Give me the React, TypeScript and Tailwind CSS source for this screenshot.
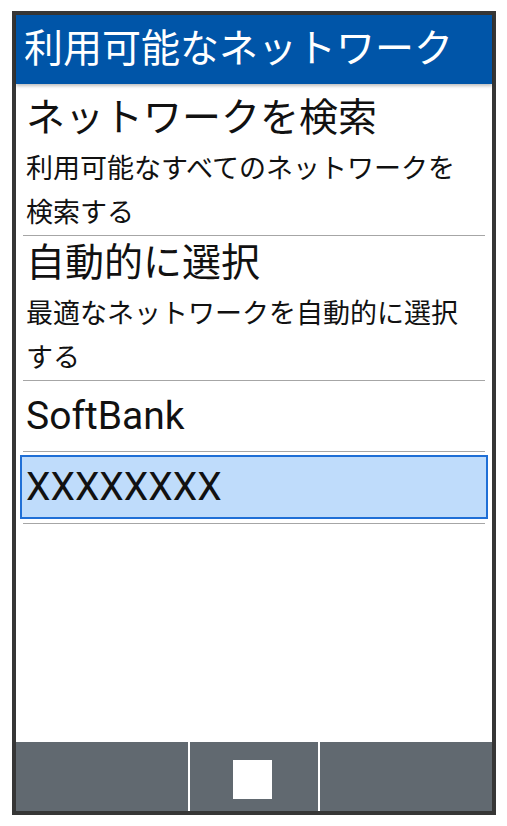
import React from "react";

const font = { fontFamily: 'Roboto, "Noto Sans CJK JP", sans-serif' };

export default function App() {
  return (
    <div className="w-[507px] h-[826px] bg-white pt-[11px] pl-[12px]" style={font}>
      <div className="w-[484px] h-[804px] border-4 border-[#363636] flex flex-col bg-white">
        <div className="h-[69px] bg-[#0055a8] flex items-center pl-[8px] relative z-10 shadow-[0_2px_3px_rgba(0,0,0,0.25)]">
          <span className="text-white text-[39px] leading-none whitespace-nowrap">利用可能なネットワーク</span>
        </div>
        <div className="flex-1 flex flex-col text-[#111]">
          <div className="pt-[9px] px-[10px]">
            <div className="text-[39px] leading-[50px] whitespace-nowrap">ネットワークを検索</div>
            <div className="mt-[4px] text-[27px] leading-[44px]">利用可能なすべてのネットワークを<br />検索する</div>
          </div>
          <div className="mx-[7px] h-px bg-[#a6a6a6]" />
          <div className="pt-[2px] px-[10px]">
            <div className="text-[39px] leading-[50px] whitespace-nowrap">自動的に選択</div>
            <div className="mt-[4px] text-[27px] leading-[44px]">最適なネットワークを自動的に選択<br />する</div>
          </div>
          <div className="mx-[7px] h-px bg-[#a6a6a6]" />
          <div className="h-[70px] flex items-center px-[10px] text-[39px]">SoftBank</div>
          <div className="mx-[7px] h-px bg-[#a6a6a6]" />
          <div className="mt-[3px] mx-[4px] h-[64px] border-2 border-[#1f6fd6] bg-[#bfdcfb] flex items-center pl-[4px] text-[39px]">XXXXXXXX</div>
          <div className="mt-[4px] mx-[7px] h-px bg-[#a6a6a6]" />
        </div>
        <div className="h-[69px] bg-[#616970] flex">
          <div className="w-[172px]" />
          <div className="w-[2px] bg-white" />
          <div className="w-[128px] flex items-center justify-center pt-[6px] pr-[3px]">
            <div className="w-[39px] h-[39px] bg-white" />
          </div>
          <div className="w-[2px] bg-white" />
          <div className="flex-1" />
        </div>
      </div>
    </div>
  );
}
